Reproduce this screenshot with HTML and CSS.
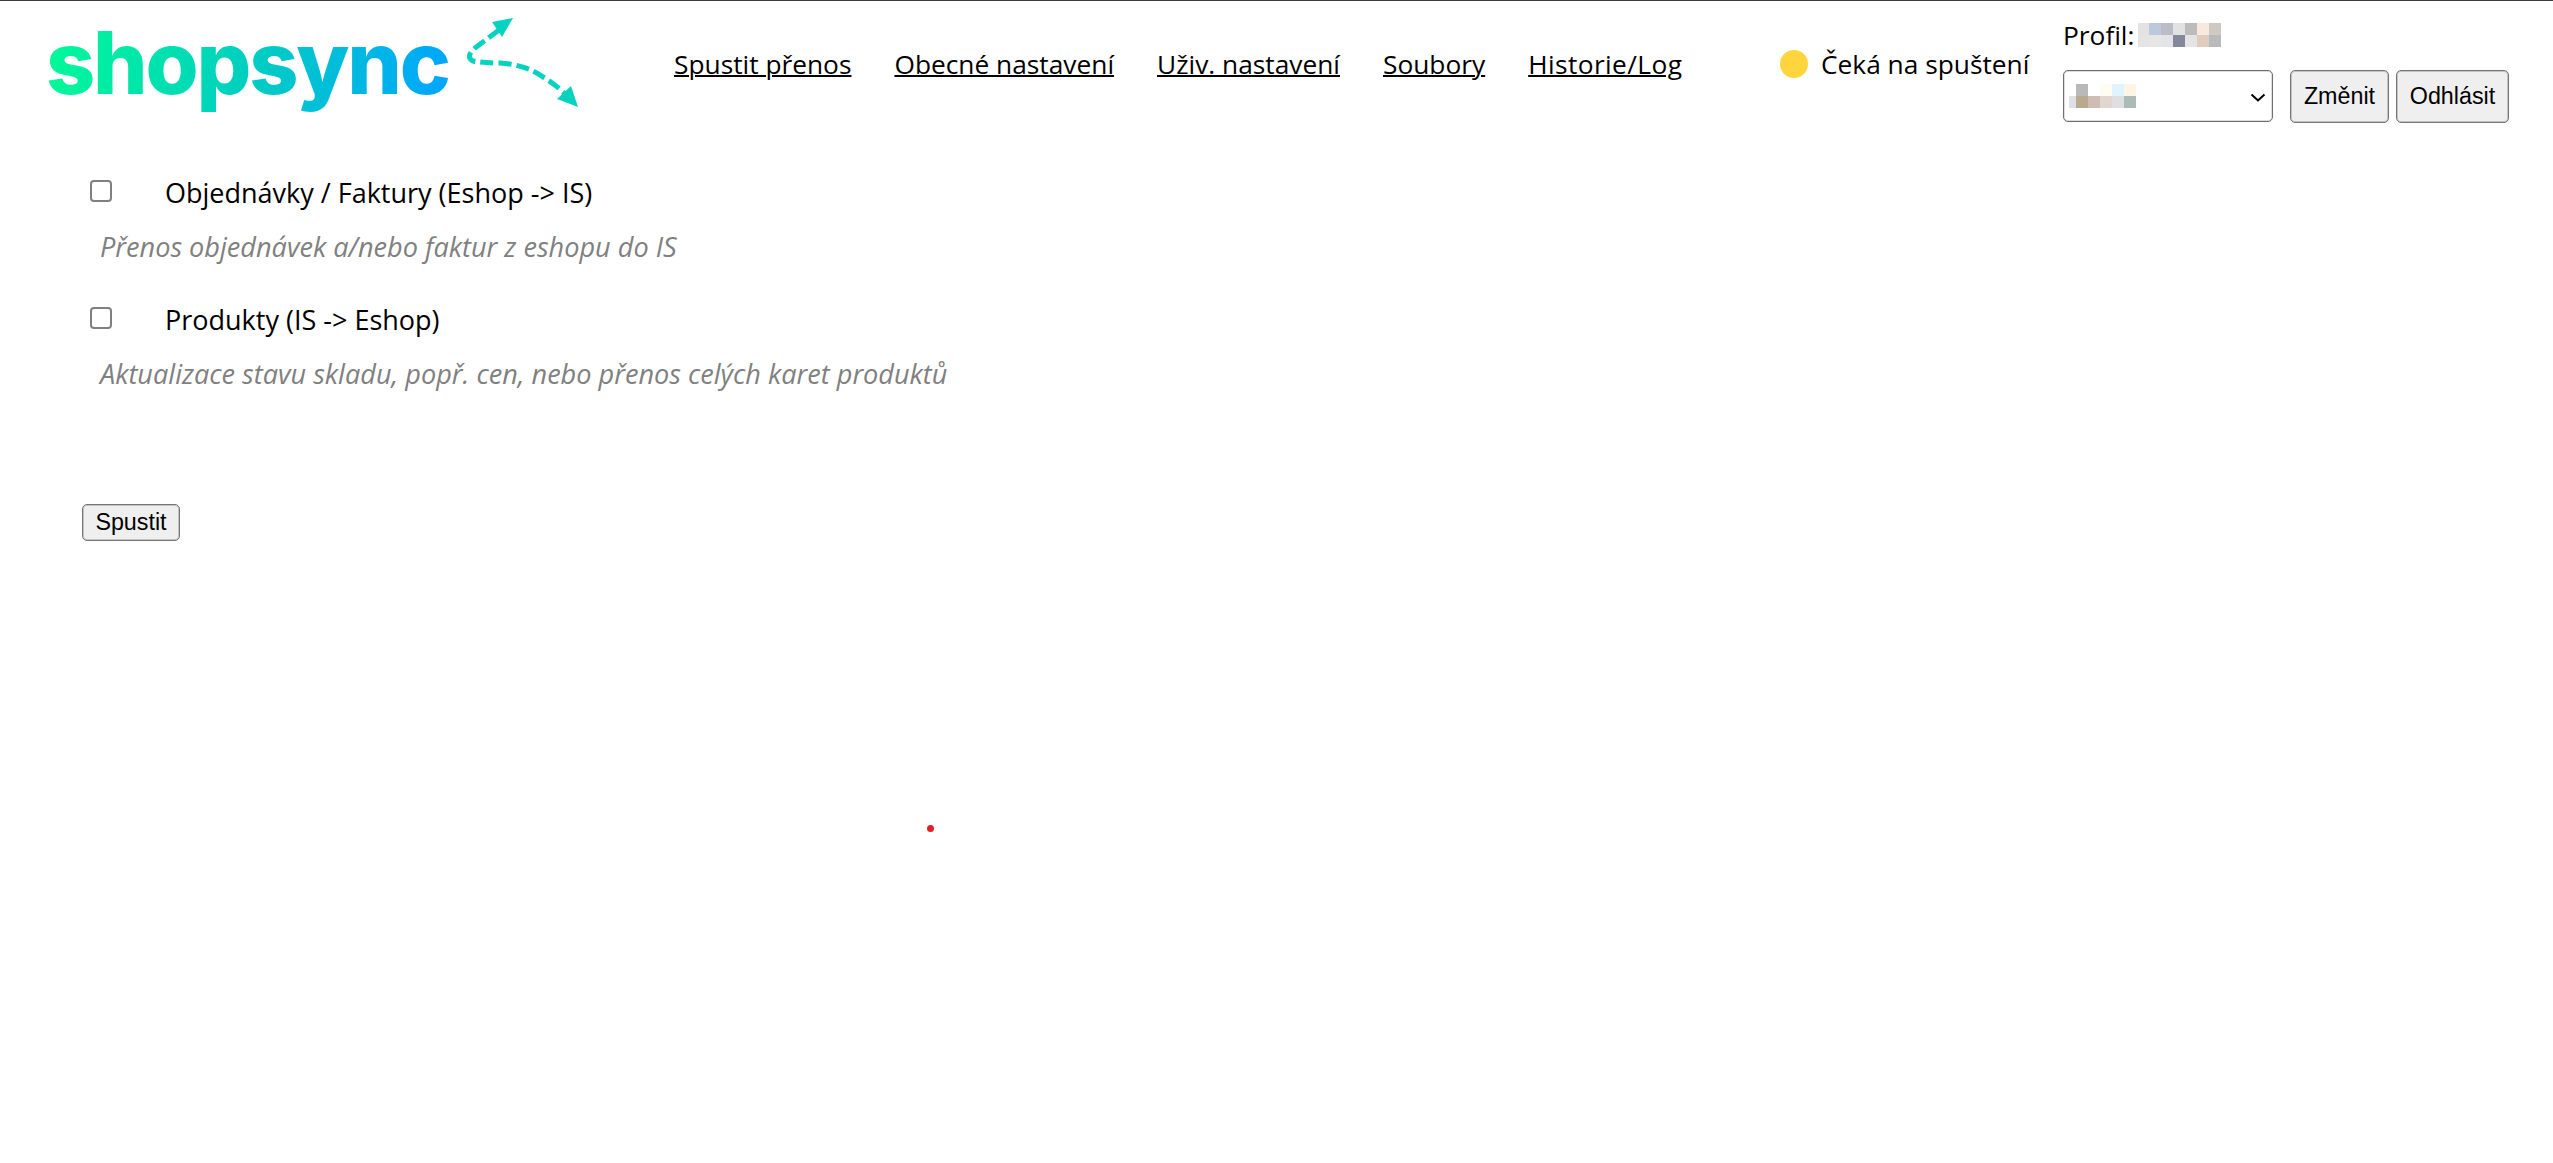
FILE: index.html
```html
<!DOCTYPE html>
<html lang="cs">
<head>
<meta charset="utf-8">
<title>ShopSync</title>
<link rel="stylesheet" href="styles.css">
</head>
<body>
<header class="header">
  <a class="logo" href="#">
    <span class="logo-text">shopsync</span>
    <svg class="logo-arrows" width="125" height="100" viewBox="0 0 125 100">
      <path class="dash" d="M32 20 L8 38 Q-2 47 6 51 Q16 53 33 53 Q60 55 76 67 Q88 74 98 84"/>
      <polygon class="head" points="46,8 25,12 35,27"/>
      <polygon class="head" points="111,97 90,89 104,76"/>
    </svg>
  </a>
  <nav class="nav">
    <a href="#">Spustit přenos</a>
    <a href="#">Obecné nastavení</a>
    <a href="#">Uživ. nastavení</a>
    <a href="#">Soubory</a>
    <a class="nav-last" href="#">Historie/Log</a>
  </nav>
  <div class="status"><span class="dot"></span><span>Čeká na spuštení</span></div>
  <div class="profile">
    <div class="profile-name"><span>Profil:</span>
      <svg class="mosaic" width="83" height="24" viewBox="0 0 83 24">
        <rect x="0" y="0" width="11" height="12" fill="#e4e2e2"/>
        <rect x="11" y="0" width="12" height="12" fill="#bcc8dc"/>
        <rect x="23" y="0" width="12" height="12" fill="#bcbcc8"/>
        <rect x="35" y="0" width="12" height="12" fill="#e2e2e2"/>
        <rect x="47" y="0" width="12" height="12" fill="#bcbcbc"/>
        <rect x="59" y="0" width="12" height="12" fill="#f8e8e0"/>
        <rect x="71" y="0" width="12" height="12" fill="#d0c8c2"/>
        <rect x="0" y="12" width="11" height="12" fill="#e6e4e2"/>
        <rect x="11" y="12" width="12" height="12" fill="#e6e6e4"/>
        <rect x="23" y="12" width="12" height="12" fill="#e2e4ea"/>
        <rect x="35" y="12" width="12" height="12" fill="#84889a"/>
        <rect x="47" y="12" width="12" height="12" fill="#e4e4e4"/>
        <rect x="59" y="12" width="12" height="12" fill="#e0ccbe"/>
        <rect x="71" y="12" width="12" height="12" fill="#bababa"/>
      </svg>
    </div>
    <div class="profile-controls">
      <div class="select">
        <svg class="mosaic" width="67" height="24" viewBox="0 0 67 24">
          <rect x="7" y="0" width="12" height="12" fill="#b9b9b9"/>
          <rect x="31" y="0" width="12" height="12" fill="#fffdf2"/>
          <rect x="43" y="0" width="12" height="12" fill="#e0f4ff"/>
          <rect x="55" y="0" width="12" height="12" fill="#fff5e2"/>
          <rect x="0" y="12" width="7" height="12" fill="#dfdfe6"/>
          <rect x="7" y="12" width="12" height="12" fill="#b9a98f"/>
          <rect x="19" y="12" width="12" height="12" fill="#cfbdb5"/>
          <rect x="31" y="12" width="12" height="12" fill="#e1d6d0"/>
          <rect x="43" y="12" width="12" height="12" fill="#dfdfe2"/>
          <rect x="55" y="12" width="12" height="12" fill="#abbcb7"/>
        </svg>
        <svg class="chev" width="16" height="9" viewBox="0 0 16 9"><path d="M1.5 1.5l6.5 6 6.5-6" fill="none" stroke="#000" stroke-width="2"/></svg>
      </div>
      <button class="btn btn-change" type="button">Změnit</button>
      <button class="btn btn-out" type="button">Odhlásit</button>
    </div>
  </div>
</header>
<main class="main">
  <div class="row"><input class="check" type="checkbox"><span class="label">Objednávky / Faktury (Eshop -&gt; IS)</span></div>
  <p class="desc">Přenos objednávek a/nebo faktur z eshopu do IS</p>
  <div class="row"><input class="check" type="checkbox"><span class="label">Produkty (IS -&gt; Eshop)</span></div>
  <p class="desc">Aktualizace stavu skladu, popř. cen, nebo přenos celých karet produktů</p>
  <button class="btn btn-run" type="button">Spustit</button>
</main>
<span class="red-dot"></span>
</body>
</html>
```
FILE: styles.css
```css
* { box-sizing: border-box; }
html, body { margin: 0; height: 100%; }
body { background: #fff; color: #000; font-family: "Open Sans", sans-serif; font-size: 27px; border-top: 1px solid #3c3c3c; position: relative; overflow: hidden; }
.header { display: flex; align-items: flex-start; height: 140px; padding-left: 47px; }
.logo { display: flex; text-decoration: none; width: 627px; flex: none; position: relative; }
.logo-text { font-family: "Inter", sans-serif; font-weight: 800; font-size: 86px; line-height: 104px; margin: 10px 0 0 -1px; letter-spacing: -2.2px; background: linear-gradient(100deg, #00fb96 0%, #00cfc0 50%, #00a4ff 100%); -webkit-background-clip: text; background-clip: text; color: transparent; }
.logo-arrows { position: absolute; left: 420px; top: 9px; overflow: visible; }
.dash { fill: none; stroke: #05d3bf; stroke-width: 5; stroke-dasharray: 13 5; }
.head { fill: #05d3bf; }
.nav { display: flex; gap: 43px; margin-top: 45px; width: 1106px; flex: none; font-size: 26.3px; }
.nav a { color: #000; text-decoration: underline; text-decoration-thickness: 2px; line-height: 36px; }
.nav .nav-last { letter-spacing: 0.4px; }
.status { display: flex; align-items: center; gap: 13px; margin-top: 45px; width: 283px; flex: none; line-height: 36px; font-size: 26.3px; }
.dot { width: 28px; height: 28px; border-radius: 50%; background: #ffd53d; flex: none; }
.profile { flex: none; font-size: 26.3px; }
.profile-name { display: flex; align-items: center; gap: 4px; height: 44px; margin-top: 12px; }
.profile-controls { display: flex; margin-top: 13px; height: 53px; }
.select { width: 210px; height: 52px; border: 1px solid #6e6e6e; box-shadow: inset 0 0 0 1px rgba(118, 118, 118, 0.25); border-radius: 5px; position: relative; margin-right: 17px; padding: 13px 0 0 5px; }
.select .mosaic { display: block; }
.chev { position: absolute; right: 6px; top: 22px; }
.btn { font-family: "Liberation Sans", sans-serif; font-size: 23.3px; background: #efefef; border: 1px solid #767676; box-shadow: inset 0 0 0 1px rgba(118, 118, 118, 0.35); border-radius: 5px; color: #000; padding: 0; }
.btn-change { width: 99px; height: 53px; margin-right: 7px; }
.btn-out { width: 113px; height: 53px; }
.main { padding: 0 0 0 82px; margin-top: 29px; }
.row { display: flex; align-items: center; height: 44px; }
.check { appearance: none; width: 22px; height: 22px; margin: 0 0 2px 8px; border: 2px solid #808080; border-radius: 4px; background: #fff; }
.label { margin-left: 53px; }
.desc { margin: 11px 0 28px 18px; height: 44px; line-height: 44px; font-style: italic; font-size: 27.1px; color: #808080; }
.btn-run { width: 98px; height: 37px; margin-top: 108px; display: block; }
.red-dot { position: absolute; left: 927px; top: 824px; width: 7px; height: 7px; border-radius: 50%; background: #e21f26; }
```
